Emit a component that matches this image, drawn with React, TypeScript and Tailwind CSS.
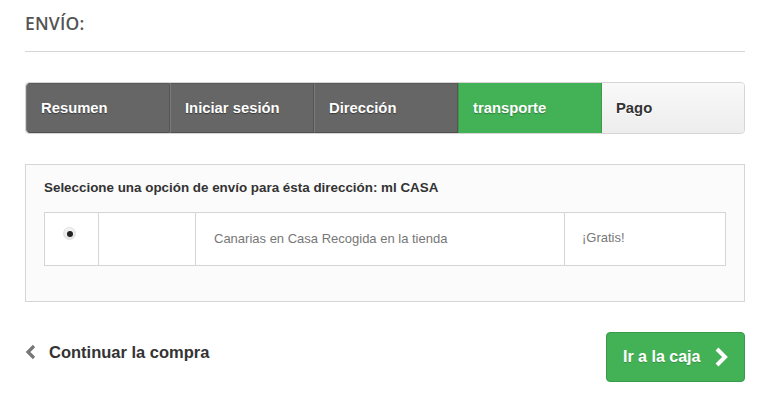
import React from "react";

const tabBase =
  "flex-1 flex items-center pl-[14px] text-[14.8px] font-bold text-white [text-shadow:0_1px_1px_rgba(0,0,0,0.45)] border-l border-l-[#7a7a7a] border-r border-r-[#555]";

export default function App() {
  return (
    <div className="w-[772px] h-[420px] bg-white font-['Liberation_Sans',Arial,sans-serif] text-[#333]">
      <div className="px-[25px] pt-[12px] w-[770px]">
        <h1 className="font-['Open_Sans',sans-serif] font-semibold text-[17.5px] text-[#555454] leading-[22px] pb-[17px] border-b border-[#d6d4d4] tracking-[0.2px]">
          ENVÍO:
        </h1>

        <div className="mt-[30px] flex h-[52px] rounded-[4px] border border-[#d6d4d4] overflow-hidden">
          <div className={`${tabBase} bg-[#666] border-t border-t-[#5a5a5a] border-b border-b-[#4f4f4f] rounded-l-[4px]`}>
            Resumen
          </div>
          <div className={`${tabBase} bg-[#666] border-t border-t-[#5a5a5a] border-b border-b-[#4f4f4f]`}>
            Iniciar sesión
          </div>
          <div className={`${tabBase} bg-[#666] border-t border-t-[#5a5a5a] border-b border-b-[#4f4f4f]`}>
            Dirección
          </div>
          <div className="flex-1 flex items-center pl-[14px] text-[14.8px] font-bold text-white [text-shadow:0_1px_1px_rgba(0,0,0,0.3)] bg-[#43b155] border-l border-[#3a9a49] border-r border-r-[#3a9a49]">
            transporte
          </div>
          <div className="flex-1 flex items-center pl-[14px] text-[14.8px] font-bold text-[#333] bg-gradient-to-b from-[#f9f9f9] to-[#ededed] [text-shadow:0_1px_0_#fff]">
            Pago
          </div>
        </div>

        <div className="mt-[30px] h-[138px] bg-[#fbfbfb] border border-[#d6d4d4] px-[18px] pt-[15px]">
          <p className="text-[13.4px] font-bold text-[#333] leading-[16px]">
            Seleccione una opción de envío para ésta dirección: ml CASA
          </p>
          <div className="mt-[16px] flex h-[54px] bg-white border border-[#d6d4d4] text-[13px] text-[#777]">
            <div className="w-[54px] flex justify-start pl-[18px] pt-[14px] border-r border-[#d6d4d4]">
              <span className="w-[13px] h-[13px] rounded-full bg-gradient-to-b from-[#f4f4f4] to-[#e4e4e4] border border-[#e0e0e0] flex items-center justify-center">
                <span className="w-[6px] h-[6px] rounded-full bg-[#222]" />
              </span>
            </div>
            <div className="w-[97px] border-r border-[#d6d4d4]" />
            <div className="w-[369px] border-r border-[#d6d4d4] flex items-center pl-[18px]">
              Canarias en Casa Recogida en la tienda
            </div>
            <div className="flex-1 flex items-center pl-[17px] pb-[2px]">¡Gratis!</div>
          </div>
        </div>

        <div className="mt-[30px] flex items-start justify-between">
          <div className="flex items-center gap-[12px] pt-[10px]">
            <svg width="12" height="16" viewBox="0 0 12 16">
              <path d="M9 2 L3 8 L9 14" fill="none" stroke="#777" strokeWidth="3.2" strokeLinejoin="miter" />
            </svg>
            <span className="text-[16.5px] font-bold text-[#333] leading-[20px]">Continuar la compra</span>
          </div>
          <button className="w-[139px] h-[50px] rounded-[4px] bg-[#43b155] border border-[#399b49] flex items-center pl-[16px] gap-[13px] text-white text-[16px] font-bold [text-shadow:0_1px_0_rgba(0,0,0,0.2)]">
            <span>Ir a la caja</span>
            <svg width="16" height="22" viewBox="0 0 16 22">
              <path d="M4 3 L12 11 L4 19" fill="none" stroke="#fff" strokeWidth="4" strokeLinejoin="miter" />
            </svg>
          </button>
        </div>
      </div>
    </div>
  );
}
